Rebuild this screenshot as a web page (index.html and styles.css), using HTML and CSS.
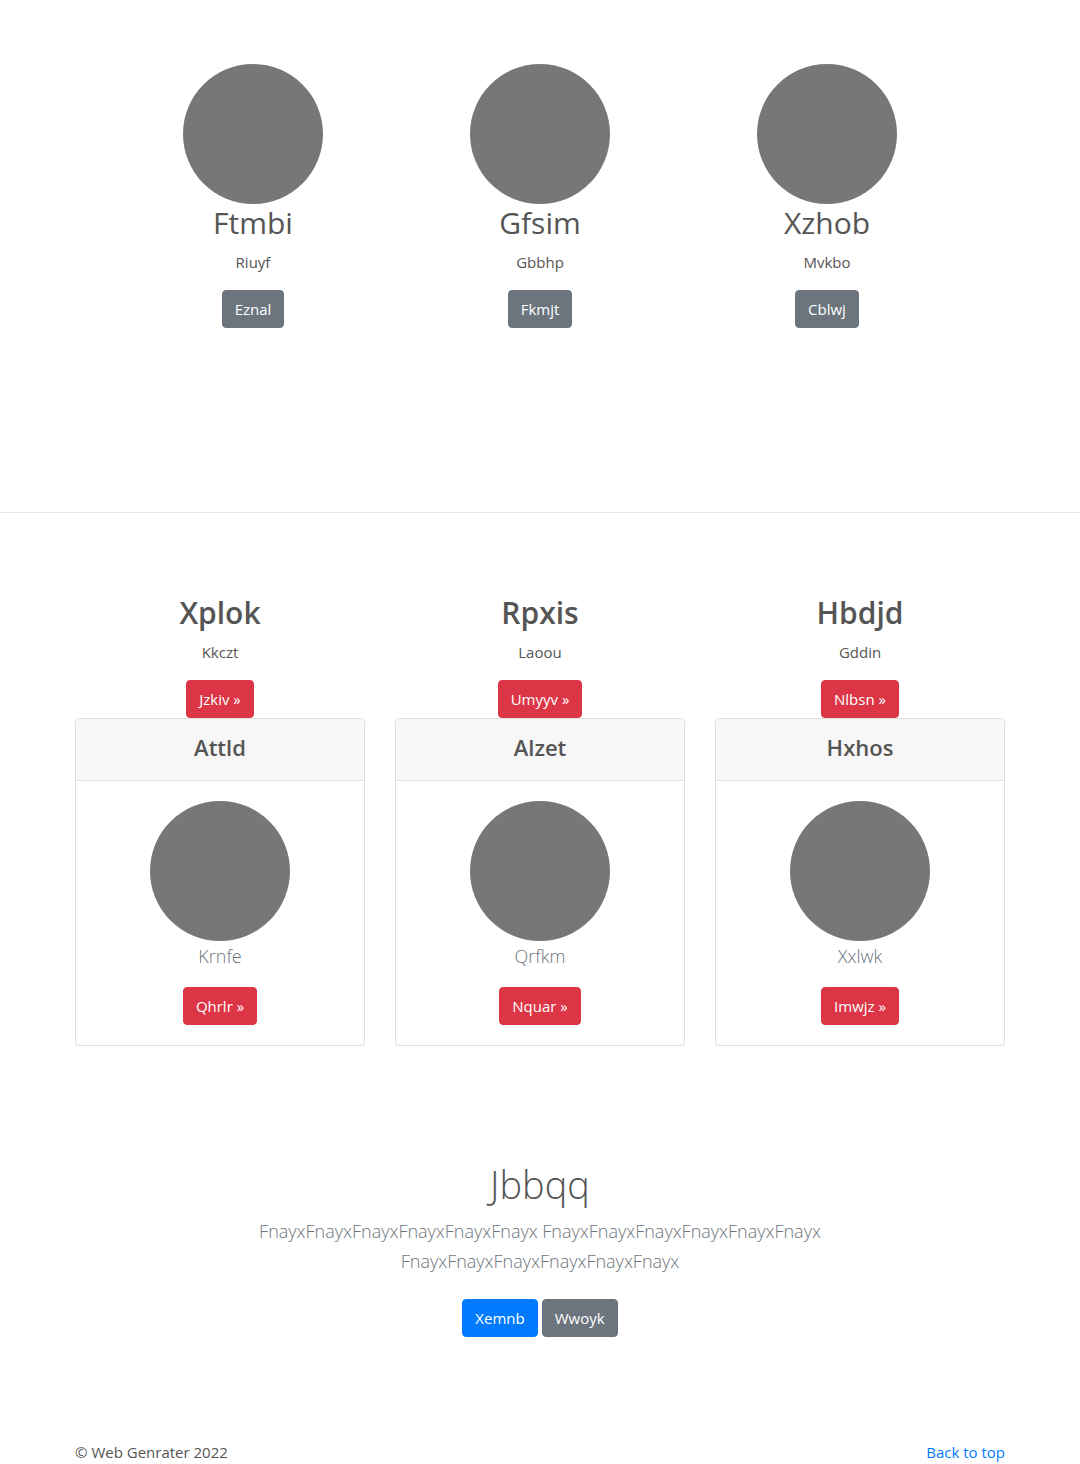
FILE: index.html
```html
<!DOCTYPE html>
<html lang="en">
<head>
<meta charset="utf-8">
<title>Web Genrater</title>
<link rel="stylesheet" href="styles.css">
</head>
<body>
<section class="team">
  <div class="team-row">
    <div class="member">
      <div class="avatar"></div>
      <h2 class="member-name">Ftmbi</h2>
      <p class="member-role">Riuyf</p>
      <a class="btn btn-secondary" href="#">Eznal</a>
    </div>
    <div class="member">
      <div class="avatar"></div>
      <h2 class="member-name">Gfsim</h2>
      <p class="member-role">Gbbhp</p>
      <a class="btn btn-secondary" href="#">Fkmjt</a>
    </div>
    <div class="member">
      <div class="avatar"></div>
      <h2 class="member-name">Xzhob</h2>
      <p class="member-role">Mvkbo</p>
      <a class="btn btn-secondary" href="#">Cblwj</a>
    </div>
  </div>
</section>

<hr class="divider">

<section class="features">
  <div class="feature-row">
    <div class="feature">
      <h2 class="feature-title">Xplok</h2>
      <p class="feature-sub">Kkczt</p>
      <a class="btn btn-danger" href="#">Jzkiv &raquo;</a>
      <div class="card">
        <div class="card-header"><h3 class="card-title">Attld</h3></div>
        <div class="card-body">
          <div class="avatar"></div>
          <p class="card-lead">Krnfe</p>
          <a class="btn btn-danger" href="#">Qhrlr &raquo;</a>
        </div>
      </div>
    </div>
    <div class="feature">
      <h2 class="feature-title">Rpxis</h2>
      <p class="feature-sub">Laoou</p>
      <a class="btn btn-danger" href="#">Umyyv &raquo;</a>
      <div class="card">
        <div class="card-header"><h3 class="card-title">Alzet</h3></div>
        <div class="card-body">
          <div class="avatar"></div>
          <p class="card-lead">Qrfkm</p>
          <a class="btn btn-danger" href="#">Nquar &raquo;</a>
        </div>
      </div>
    </div>
    <div class="feature">
      <h2 class="feature-title">Hbdjd</h2>
      <p class="feature-sub">Gddin</p>
      <a class="btn btn-danger" href="#">Nlbsn &raquo;</a>
      <div class="card">
        <div class="card-header"><h3 class="card-title">Hxhos</h3></div>
        <div class="card-body">
          <div class="avatar"></div>
          <p class="card-lead">Xxlwk</p>
          <a class="btn btn-danger" href="#">Imwjz &raquo;</a>
        </div>
      </div>
    </div>
  </div>
</section>

<section class="hero">
  <h1 class="hero-title">Jbbqq</h1>
  <p class="hero-lead">FnayxFnayxFnayxFnayxFnayxFnayx FnayxFnayxFnayxFnayxFnayxFnayx FnayxFnayxFnayxFnayxFnayxFnayx</p>
  <div class="hero-actions">
    <a class="btn btn-primary" href="#">Xemnb</a>
    <a class="btn btn-secondary" href="#">Wwoyk</a>
  </div>
</section>

<footer class="footer">
  <p class="copy">&copy; Web Genrater 2022</p>
  <a class="back-top" href="#">Back to top</a>
</footer>
</body>
</html>
```

FILE: styles.css
```css
* { box-sizing: border-box; }

body {
  margin: 0;
  font-family: "Open Sans", "Noto Sans", Arial, sans-serif;
  font-size: 16px;
  line-height: 1.5;
  color: #555;
  background: #fff;
}

h1, h2, h3, p { margin: 0; }

.btn {
  display: inline-block;
  padding: 6px 12px;
  font-size: 15px;
  line-height: 24px;
  border: 1px solid transparent;
  border-radius: 4px;
  color: #fff;
  text-decoration: none;
  vertical-align: middle;
}
.btn-secondary { background: #6c757d; border-color: #6c757d; }
.btn-danger { background: #dc3545; border-color: #dc3545; }
.btn-primary { background: #007bff; border-color: #007bff; }

.avatar {
  width: 140px;
  height: 140px;
  border-radius: 50%;
  background: #777;
  margin: 0 auto;
}

/* Team section */
.team {
  padding-top: 64px;
  height: 512px;
}
.team-row {
  width: 861px;
  margin: 0 auto;
  display: grid;
  grid-template-columns: repeat(3, 1fr);
}
.member { text-align: center; }
.member-name {
  font-size: 30px;
  font-weight: 400;
  line-height: 38px;
  margin-bottom: 8px;
  color: #555;
}
.member-role {
  font-size: 15px;
  line-height: 24px;
  margin-bottom: 16px;
}

.divider {
  margin: 0;
  border: 0;
  border-top: 1px solid #e6e6e6;
}

/* Features */
.features { padding-top: 81px; }
.feature-row {
  width: 960px;
  margin: 0 auto;
  display: grid;
  grid-template-columns: repeat(3, 1fr);
}
.feature {
  padding: 0 15px;
  text-align: center;
}
.feature-title {
  font-size: 30px;
  font-weight: 600;
  line-height: 38px;
  margin-bottom: 8px;
}
.feature-sub {
  font-size: 15px;
  line-height: 24px;
  margin-bottom: 16px;
}
.card {
  border: 1px solid #dfdfdf;
  border-radius: 4px;
  text-align: center;
}
.card-header {
  background: #f7f7f7;
  border-bottom: 1px solid #dfdfdf;
  padding: 12px 20px;
  height: 62px;
}
.card-title {
  font-size: 22px;
  font-weight: 600;
  line-height: 29px;
  margin-top: 2px;
}
.card-body { padding: 20px; }
.card-lead {
  font-size: 18px;
  font-weight: 300;
  line-height: 30px;
  color: #6c757d;
  margin-bottom: 16px;
}

/* Hero */
.hero {
  padding-top: 114px;
  text-align: center;
}
.hero-title {
  font-size: 38px;
  font-weight: 300;
  line-height: 48px;
  margin-bottom: 8px;
  color: #555;
}
.hero-lead {
  max-width: 620px;
  margin: 0 auto 16px;
  font-size: 18px;
  font-weight: 300;
  line-height: 30px;
  color: #6c757d;
}
.hero-actions {
  display: flex;
  justify-content: center;
  gap: 4px;
  padding: 7px 0;
}

/* Footer */
.footer {
  width: 930px;
  margin: 0 auto;
  padding-top: 96px;
  display: flex;
  justify-content: space-between;
  font-size: 15px;
  line-height: 24px;
}
.copy { color: #555; }
.back-top { color: #007bff; text-decoration: none; }
```
